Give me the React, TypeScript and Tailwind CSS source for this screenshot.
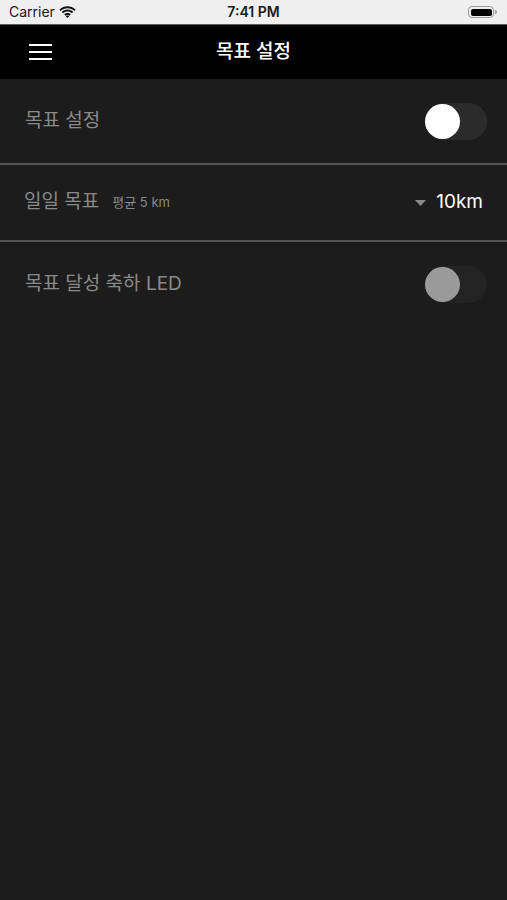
import React from "react";

const font = { fontFamily: '"Inter", "Noto Sans CJK KR", sans-serif' };

function Toggle({ thumb, track }: { thumb: string; track: string }) {
  return (
    <div className={`relative w-[62px] h-[37px] rounded-full ${track}`}>
      <div className={`absolute left-0 top-[1px] w-[35px] h-[35px] rounded-full ${thumb}`} />
    </div>
  );
}

export default function App() {
  return (
    <div className="w-[507px] h-[900px] bg-[#1c1c1c] flex flex-col" style={font}>
      {/* status bar */}
      <div className="h-[25px] bg-[#efefef] border-b border-[#5a5a5a] flex items-center justify-between px-[9px] relative">
        <div className="flex items-center gap-[4px]">
          <span className="text-[14px] text-[#1a1a1a] leading-none" style={{ fontFamily: '"Inter", sans-serif' }}>Carrier</span>
          <svg width="17" height="12" viewBox="0 0 17 12">
            <path d="M8.5 2.2c2.6 0 5 1 6.8 2.7l1.3-1.4C14.4 1.4 11.5 0.2 8.5 0.2S2.6 1.4 0.4 3.5l1.3 1.4C3.5 3.2 5.9 2.2 8.5 2.2z" fill="#111" />
            <path d="M8.5 5.6c1.7 0 3.2.6 4.4 1.7l1.3-1.4C12.7 4.5 10.7 3.6 8.5 3.6S4.3 4.5 2.8 5.9l1.3 1.4C5.3 6.2 6.8 5.6 8.5 5.6z" fill="#111" />
            <path d="M8.5 8.9c.8 0 1.5.3 2 .8l1.3-1.4C10.9 7.5 9.8 7 8.5 7s-2.4.5-3.3 1.3l1.3 1.4c.5-.5 1.2-.8 2-.8z" fill="#111" />
            <path d="M8.5 12l1.7-1.8c-.4-.4-1-.6-1.7-.6s-1.3.2-1.7.6z" fill="#111" />
          </svg>
        </div>
        <span className="absolute left-1/2 -translate-x-1/2 text-[14px] font-semibold text-[#1a1a1a] leading-none" style={{ fontFamily: '"Inter", sans-serif' }}>7:41 PM</span>
        <div className="flex items-center mr-[1px]">
          <div className="w-[26px] h-[12px] rounded-[4px] border border-[#9a9a9a] p-[1.5px]">
            <div className="w-full h-full rounded-[2px] bg-black" />
          </div>
          <div className="w-[2px] h-[4px] bg-[#9a9a9a] rounded-r-sm ml-[1px]" />
        </div>
      </div>

      {/* nav bar */}
      <div className="h-[54px] bg-black flex items-center relative">
        <div className="ml-[29px] flex flex-col gap-[5px]">
          <div className="w-[23px] h-[2px] bg-white" />
          <div className="w-[23px] h-[2px] bg-white" />
          <div className="w-[23px] h-[2px] bg-white" />
        </div>
        <span className="absolute left-1/2 -translate-x-1/2 text-white text-[19px] font-medium">목표 설정</span>
      </div>

      {/* row 1 */}
      <div className="h-[84px] flex items-center justify-between pl-[25px] pr-[20px]">
        <span className="text-[19px] text-[#8a8a8a]">목표 설정</span>
        <Toggle thumb="bg-white" track="bg-[#2b2b2b]" />
      </div>
      <div className="h-[2px] bg-[#555555]" />

      {/* row 2 */}
      <div className="h-[75px] flex items-center justify-between pl-[24px] pr-[24px]">
        <div className="flex items-center gap-[13px]">
          <span className="text-[19px] text-[#8a8a8a]">일일 목표</span>
          <span className="text-[13px] text-[#8a8a8a] mt-[1px]">평균 5 km</span>
        </div>
        <div className="flex items-center gap-[10px]">
          <svg width="11" height="6" viewBox="0 0 11 6">
            <path d="M0 0h11L5.5 6z" fill="#8a8a8a" />
          </svg>
          <span className="text-[19px] text-white">10km</span>
        </div>
      </div>
      <div className="h-[2px] bg-[#555555]" />

      {/* row 3 */}
      <div className="h-[84px] flex items-center justify-between pl-[25px] pr-[20px]">
        <span className="text-[19px] text-[#8a8a8a]">목표 달성 축하 LED</span>
        <Toggle thumb="bg-[#9a9a9a]" track="bg-[#232323]" />
      </div>
    </div>
  );
}
